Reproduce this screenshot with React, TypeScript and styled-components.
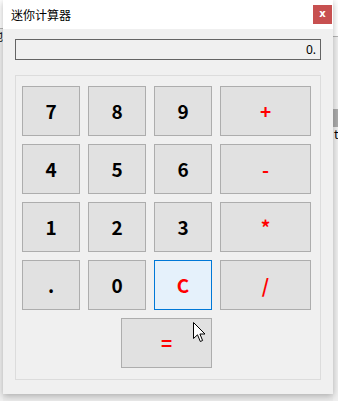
import React, { useState } from 'react'
import styled, { createGlobalStyle } from 'styled-components'

const GlobalStyle = createGlobalStyle`
  html, body {
    margin: 0;
    padding: 0;
    background: #ececec;
    overflow: hidden;
  }
  * {
    box-sizing: border-box;
  }
`

const Desktop = styled.div`
  position: relative;
  display: flex;
  width: 338px;
  height: 401px;
  font-family: 'Noto Sans CJK SC', 'Noto Sans', sans-serif;
`

const SideStrip = styled.div<{ width: number }>`
  flex: 0 0 ${({ width }) => width}px;
  display: flex;
  flex-direction: column;
  overflow: hidden;
  background: #f0f0f0;
`

const StripTop = styled.div<{ height: number }>`
  flex: 0 0 ${({ height }) => height}px;
  background: #ffffff;
  border-bottom: 1px solid #b4b4b4;
`

const StripBlock = styled.div<{ top: number; height: number; color: string }>`
  flex: 0 0 ${({ height }) => height}px;
  margin-top: ${({ top }) => top}px;
  background: ${({ color }) => color};
`

const StripText = styled.div<{ shift: number }>`
  font-size: 12px;
  line-height: 14px;
  color: #000;
  white-space: nowrap;
  margin-left: ${({ shift }) => shift}px;
`

const Window = styled.div`
  flex: 0 0 330px;
  height: 394px;
  display: flex;
  flex-direction: column;
  background: #f0f0f0;
  box-shadow: 0 2px 7px rgba(0, 0, 0, 0.28);
  z-index: 1;
`

const TitleBar = styled.div`
  height: 29px;
  display: flex;
  align-items: center;
  justify-content: space-between;
  padding: 0 1px 0 8px;
  background: #ffffff;
`

const Title = styled.span`
  font-size: 12px;
  color: #000;
  margin-top: -1px;
`

const CloseButton = styled.div`
  width: 19px;
  height: 19px;
  display: flex;
  align-items: center;
  justify-content: center;
  background: #c75050;
  color: #fff;
  font-family: 'DejaVu Sans', sans-serif;
  font-weight: bold;
  font-size: 10px;
  line-height: 1;
  padding-bottom: 2px;
`

const Body = styled.div`
  display: flex;
  flex-direction: column;
  padding: 10px 12px 0 12px;
`

const Display = styled.div`
  height: 21px;
  border: 1px solid #646464;
  background: #f0f0f0;
  display: flex;
  align-items: center;
  justify-content: flex-end;
  padding-right: 4px;
  font-family: 'Noto Sans', sans-serif;
  font-size: 12px;
  color: #000;
`

const GroupBox = styled.div`
  margin-top: 15px;
  border: 1px solid #dcdcdc;
  padding: 10px 9px 11px 6px;
  display: flex;
  flex-direction: column;
  gap: 8px;
`

const KeyGrid = styled.div`
  display: grid;
  grid-template-columns: 58px 58px 58px 91px;
  grid-auto-rows: 50px;
  gap: 8px;
`

const EqualsRow = styled.div`
  display: flex;
  justify-content: center;
`

const Key = styled.button<{ $op?: boolean; $active?: boolean; $wide?: boolean }>`
  width: ${({ $wide }) => ($wide ? '91px' : '100%')};
  height: 50px;
  margin: 0;
  padding: 0 0 2px 0;
  border: 1px solid ${({ $active }) => ($active ? '#0078d7' : '#adadad')};
  background: ${({ $active }) => ($active ? '#e5f1fb' : '#e1e1e1')};
  color: ${({ $op }) => ($op ? '#ff0000' : '#000')};
  font-family: 'Noto Sans CJK SC', 'Noto Sans', sans-serif;
  font-weight: bold;
  font-size: 19px;
  line-height: 1;
  cursor: default;
  outline: none;
`

const Cursor = styled.svg`
  position: absolute;
  left: 193px;
  top: 322px;
  z-index: 5;
`

const keys: { label: string; op?: boolean }[] = [
  { label: '7' }, { label: '8' }, { label: '9' }, { label: '+', op: true },
  { label: '4' }, { label: '5' }, { label: '6' }, { label: '-', op: true },
  { label: '1' }, { label: '2' }, { label: '3' }, { label: '*', op: true },
  { label: '.' }, { label: '0' }, { label: 'C', op: true }, { label: '/', op: true },
]

export default function App() {
  const [value] = useState('0.')

  return (
    <>
      <GlobalStyle />
      <Desktop>
        <SideStrip width={3}>
          <StripTop height={29} />
          <StripText shift={-9}>地</StripText>
        </SideStrip>

        <Window>
          <TitleBar>
            <Title>迷你计算器</Title>
            <CloseButton>x</CloseButton>
          </TitleBar>

          <Body>
            <Display>{value}</Display>

            <GroupBox>
              <KeyGrid>
                {keys.map((k) => (
                  <Key key={k.label} $op={k.op} $active={k.label === 'C'}>
                    {k.label}
                  </Key>
                ))}
              </KeyGrid>
              <EqualsRow>
                <Key $op $wide>=</Key>
              </EqualsRow>
            </GroupBox>
          </Body>
        </Window>

        <SideStrip width={5}>
          <StripTop height={37} />
          <StripBlock top={72} height={18} color="#acacac" />
          <StripText shift={1}>te</StripText>
        </SideStrip>

        <Cursor width="13" height="21" viewBox="0 0 13 21">
          <path
            d="M0.5 0.5 L0.5 16.5 L4.5 12.8 L7.3 19.5 L9.6 18.5 L6.9 12 L12 12 Z"
            fill="#ffffff"
            stroke="#000000"
            strokeWidth="1"
            strokeLinejoin="miter"
          />
        </Cursor>
      </Desktop>
    </>
  )
}
